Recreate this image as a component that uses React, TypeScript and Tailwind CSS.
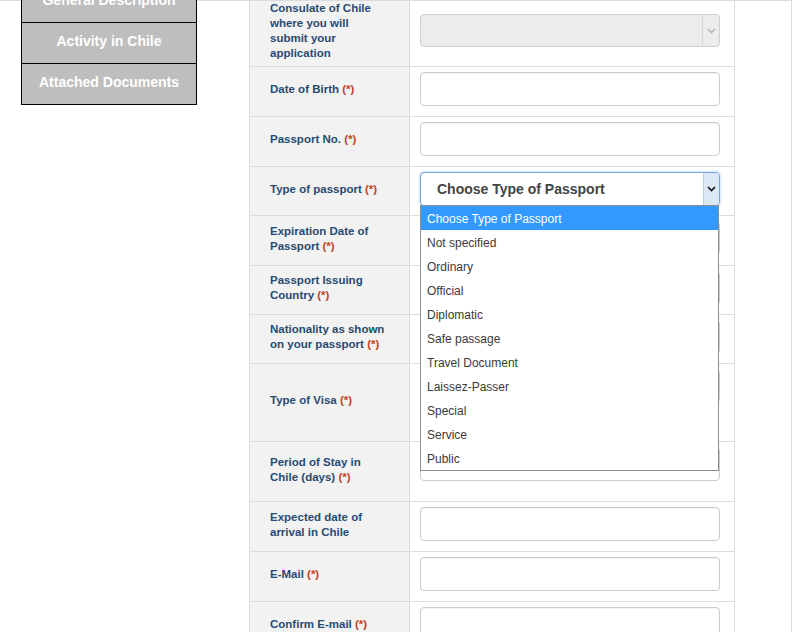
import React from 'react';

type Row = {
  label: React.ReactNode;
  height: string;
  field?: 'input' | 'select' | 'disabled';
  top?: string;
  labelPad?: string;
};

const Req = () => <span className="text-[#c4431f]">(*)</span>;

const Chevron: React.FC<{ className?: string }> = ({ className }) => (
  <svg width="9" height="6" viewBox="0 0 9 6" className={className}>
    <path d="M1 1 L4.5 4.5 L8 1" fill="none" stroke="currentColor" strokeWidth="1.6" />
  </svg>
);

const passportTypes = [
  'Choose Type of Passport',
  'Not specified',
  'Ordinary',
  'Official',
  'Diplomatic',
  'Safe passage',
  'Travel Document',
  'Laissez-Passer',
  'Special',
  'Service',
  'Public',
];

const rows: Row[] = [
  {
    label: (
      <>
        Consulate of Chile
        <br />
        where you will
        <br />
        submit your
        <br />
        application
      </>
    ),
    height: 'h-[66px]',
    field: 'disabled',
    top: 'pt-[13px]',
    labelPad: 'pb-[6px]',
  },
  { label: <>Date of Birth <Req /></>, height: 'h-[50px]', field: 'input' },
  { label: <>Passport No. <Req /></>, height: 'h-[50px]', field: 'input' },
  { label: <>Type of passport <Req /></>, height: 'h-[49px]', field: 'select' },
  { label: <>Expiration Date of<br />Passport <Req /></>, height: 'h-[50px]', field: 'input' },
  { label: <>Passport Issuing<br />Country <Req /></>, height: 'h-[49px]', field: 'input' },
  { label: <>Nationality as shown<br />on your passport <Req /></>, height: 'h-[49px]', field: 'input' },
  { label: <>Type of Visa <Req /></>, height: 'h-[78px]', field: 'input' },
  { label: <>Period of Stay in<br />Chile (days) <Req /></>, height: 'h-[60px]', field: 'input' },
  { label: <>Expected date of<br />arrival in Chile</>, height: 'h-[50px]', field: 'input' },
  { label: <>E-Mail <Req /></>, height: 'h-[50px]', field: 'input' },
  { label: <>Confirm E-mail <Req /></>, height: 'h-[50px]', field: 'input' },
];

const Field: React.FC<{ kind?: Row['field'] }> = ({ kind }) => {
  if (kind === 'disabled') {
    return (
      <div className="w-[300px] h-[33px] rounded-[4px] border border-[#cfcfcf] bg-[#ececec] flex justify-end">
        <div className="w-[17px] border-l border-[#d6d6d6] flex items-center justify-center text-[#b5b5b5]">
          <Chevron />
        </div>
      </div>
    );
  }
  if (kind === 'select') {
    return (
      <div className="relative w-[300px]">
        <div className="h-[34px] rounded-[4px] border border-[#79a6d8] bg-white flex shadow-[0_0_3px_rgba(102,160,230,0.6)]">
          <div className="flex-1 pl-[16px] flex items-center text-[14px] font-bold text-[#444]">
            Choose Type of Passport
          </div>
          <div className="w-[16px] bg-[#dce8f6] border-l border-[#b9cfe8] flex items-center justify-center text-[#111] rounded-r-[3px]">
            <Chevron />
          </div>
        </div>
        <ul className="absolute left-0 top-[33px] w-[299px] bg-white border border-[#8f8f8f] z-10">
          {passportTypes.map((t, i) => (
            <li
              key={t}
              className={
                i === 0
                  ? 'h-[24px] pl-[6px] pt-[1px] flex items-center text-[12px] bg-[#3399ff] text-white'
                  : 'h-[24px] pl-[6px] pt-[1px] flex items-center text-[12px] text-[#3a3a3a]'
              }
            >
              {t}
            </li>
          ))}
        </ul>
      </div>
    );
  }
  return (
    <div className="w-[300px] h-[34px] rounded-[4px] border border-[#cccccc] bg-white shadow-[inset_0_1px_1px_rgba(0,0,0,0.06)]" />
  );
};

export default function App() {
  return (
    <div className="w-[793px] h-[632px] overflow-hidden bg-white font-['Liberation_Sans',Arial,sans-serif]">
      <div className="w-[792px] h-full flex border-t border-r border-[#dcdcdc]">
        {/* side nav, scrolled so the first tab is cut off */}
        <div className="w-[249px] shrink-0 pl-[21px]">
          <div className="w-[176px] -mt-[20px] border-x border-b border-black">
            {['General Description', 'Activity in Chile', 'Attached Documents'].map((t) => (
              <div
                key={t}
                className="h-[41px] pb-[3px] border-t border-black bg-[#bebebe] flex items-center justify-center text-white font-bold text-[14px]"
              >
                {t}
              </div>
            ))}
          </div>
        </div>

        {/* form table */}
        <div className="w-[486px] shrink-0 border-x border-[#dcdcdc]">
          {rows.map((r, i) => (
            <div key={i} className={`${r.height} flex border-b border-[#dcdcdc]`}>
              <div
                className={`w-[160px] shrink-0 bg-[#f2f2f2] border-r border-[#dcdcdc] pl-[20px] flex items-center ${r.labelPad ?? 'pb-[4px]'}`}
              >
                <span className="text-[11.5px] leading-[15px] font-bold text-[#294a70]">{r.label}</span>
              </div>
              <div className={`flex-1 pl-[10px] ${r.top ?? 'pt-[5px]'}`}>
                <Field kind={r.field} />
              </div>
            </div>
          ))}
        </div>
      </div>
    </div>
  );
}
